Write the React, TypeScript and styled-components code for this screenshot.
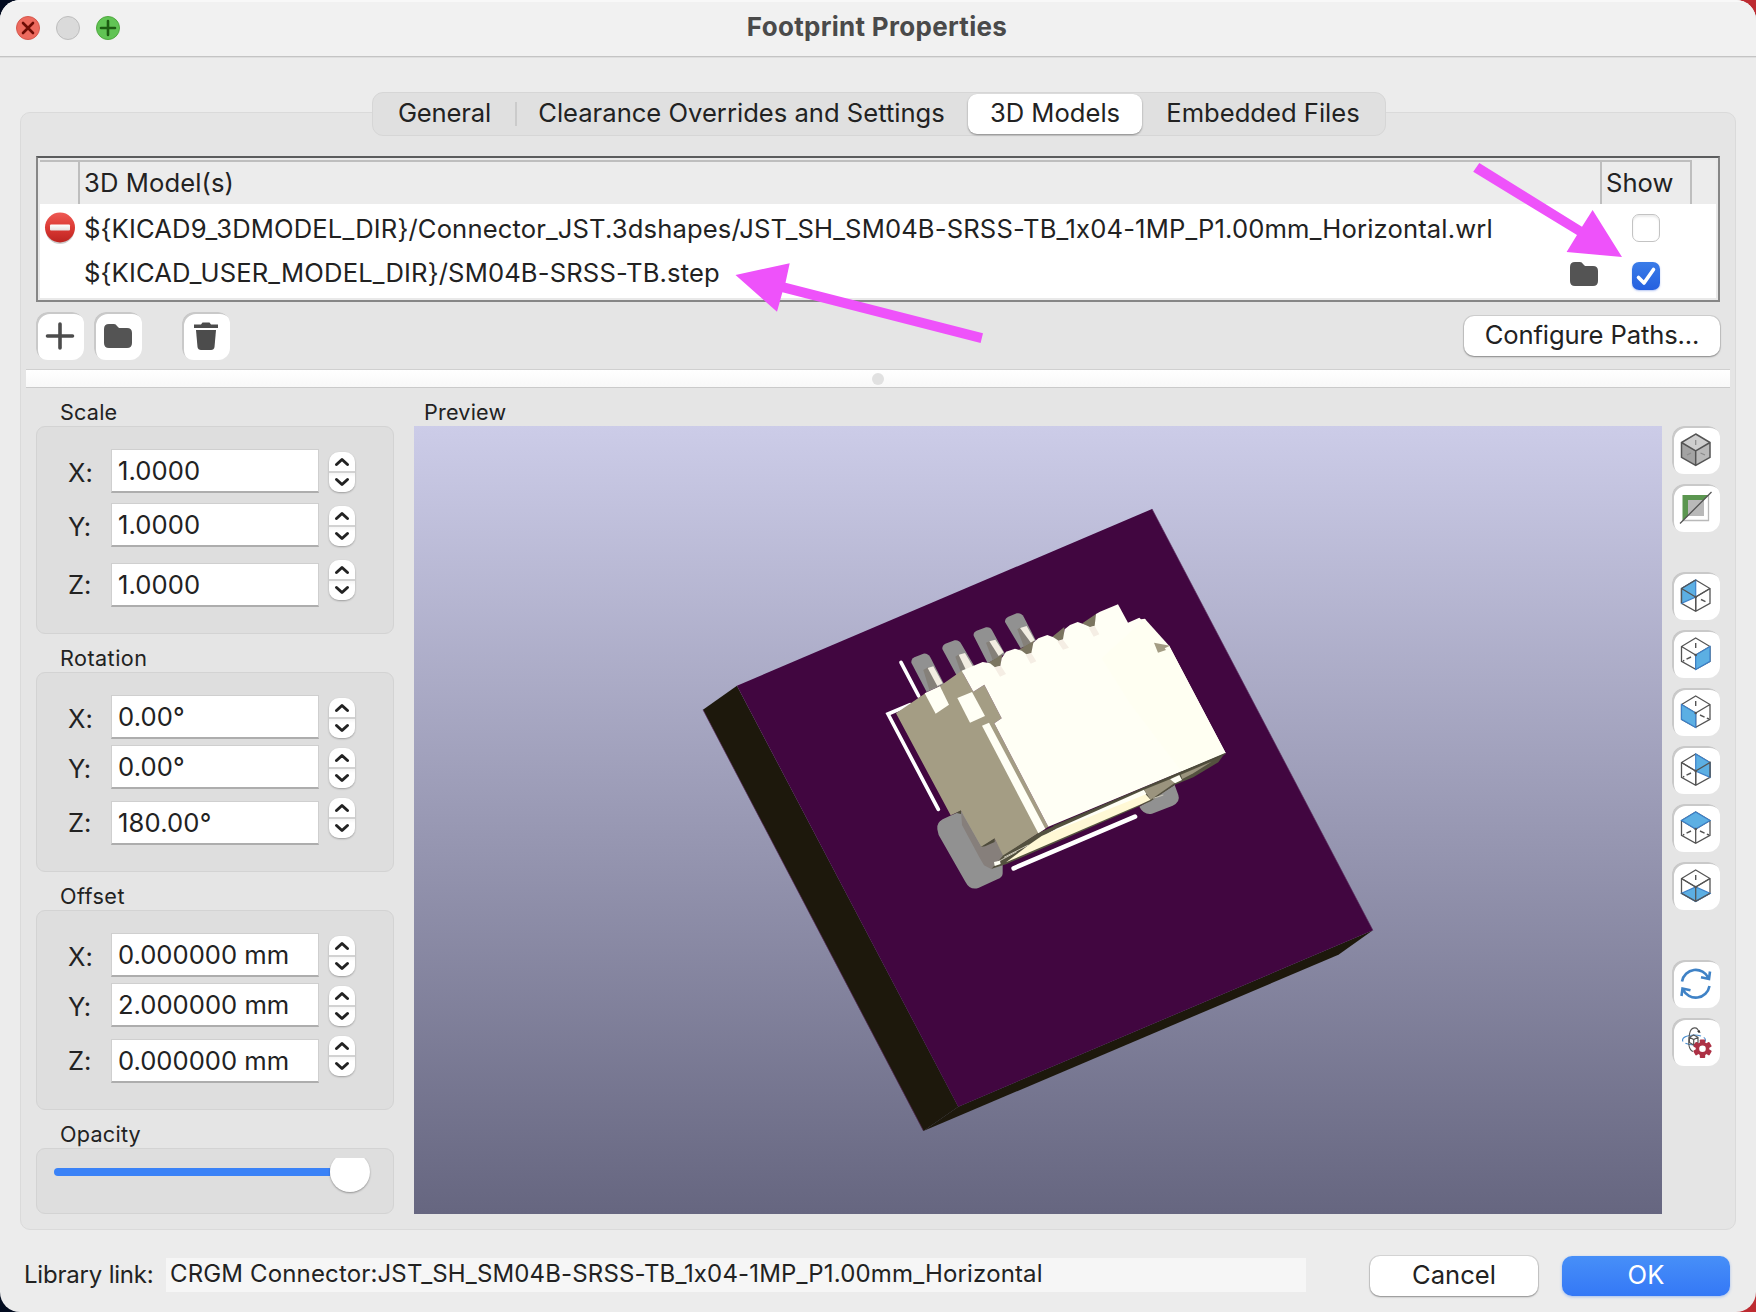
import React from "react";
import styled, { createGlobalStyle } from "styled-components";

const GlobalStyle = createGlobalStyle`
  *, *::before, *::after { box-sizing: border-box; }
  body {
    margin: 0;
    background: linear-gradient(90deg, #030c20 0 50%, #bd2b31 50% 100%);
    font-family: Inter, "Liberation Sans", sans-serif;
    font-size: 25.6px;
    line-height: 32px;
    font-feature-settings: "calt" 0;
    color: #222;
    overflow: hidden;
  }
`;

const Window = styled.div`
  position: relative;
  width: 1756px;
  height: 1312px;
  display: flex;
  flex-direction: column;
  background: #ececec;
  border-radius: 20px;
  overflow: hidden;
`;

const TitleBar = styled.header`
  flex: none;
  height: 57px;
  display: grid;
  grid-template-columns: 200px 1fr 202px;
  background: #f1f1f1;
  border-bottom: 1px solid #c4c4c4;
  box-shadow: inset 0 2px 0 #f8f8f8, 0 1px 0 #dedede;
`;

const Lights = styled.div`
  display: flex;
  gap: 16px;
  padding: 16px 0 0 16px;
`;

const Light = styled.span<{ $fill: string; $edge: string }>`
  width: 24px;
  height: 24px;
  border-radius: 50%;
  background: ${(p) => p.$fill};
  border: 1px solid ${(p) => p.$edge};
  svg { display: block; width: 22px; height: 22px; }
`;

const Title = styled.h1`
  margin: 0;
  padding-top: 11px;
  text-align: center;
  font-size: 26px;
  font-weight: 700;
  line-height: 32px;
  letter-spacing: 0.3px;
  color: #4a4a4a;
`;

const TabBar = styled.nav`
  position: relative;
  z-index: 1;
  flex: none;
  width: 1014px;
  height: 44px;
  margin: 35px 0 0 372px;
  padding: 1px;
  display: flex;
  align-items: center;
  background: #e0e0e0;
  border: 1px solid #d6d6d6;
  border-radius: 11px;
`;

const Tab = styled.div<{ $w: number; $active?: boolean; $ls?: number; $after?: number }>`
  width: ${(p) => p.$w}px;
  height: 40px;
  margin-right: ${(p) => p.$after ?? 0}px;
  padding-bottom: 3px;
  display: flex;
  align-items: center;
  justify-content: center;
  white-space: nowrap;
  letter-spacing: ${(p) => p.$ls ?? 0}px;
  border-radius: 9px;
  background: ${(p) => (p.$active ? "#fff" : "transparent")};
  box-shadow: ${(p) => (p.$active ? "0 1px 2px rgba(0,0,0,.4)" : "none")};
`;

const TabDivider = styled.span`
  width: 2px;
  height: 24px;
  background: #cbcbcb;
`;

const Panel = styled.main`
  flex: none;
  height: 1118px;
  margin: -24px 20px 0;
  padding: 43px 15px 0;
  background: #e5e5e5;
  border: 1px solid #dadada;
  border-radius: 10px;
`;

const ModelTable = styled.section`
  width: 1684px;
  height: 146px;
  padding: 2px;
  background: #e9e9e9;
  border: 2px solid #868686;
  border-top-color: #5b5c5d;
`;

const HeaderRow = styled.div`
  height: 44px;
  display: grid;
  grid-template-columns: 40px 1522px 90px 1fr;
  background: #ececec;
`;

const HeaderCell = styled.div<{ $last?: boolean; $ls?: number }>`
  padding: 5px 0 0 4px;
  letter-spacing: ${(p) => p.$ls ?? 0}px;
  border-top: 2px solid ${(p) => (p.$last ? "transparent" : "#bebebe")};
  border-right: ${(p) => (p.$last ? 0 : 2)}px solid #bebebe;
`;

const ModelRows = styled.div`
  height: 94px;
  background: #fff;
  overflow: hidden;
`;

const ModelRow = styled.div`
  height: 48px;
  display: grid;
  grid-template-columns: 44px 1486px 62px 1fr;
`;

const ErrorCell = styled.div`
  padding: 8px 0 0 4px;
`;

const PathCell = styled.div<{ $top: number }>`
  padding-top: ${(p) => p.$top}px;
  white-space: nowrap;
  letter-spacing: 0.14px;
`;

const FolderCell = styled.div`
  padding-top: 10px;
  svg { display: block; }
`;

const CheckBox = styled.span<{ $checked?: boolean }>`
  display: block;
  width: 28px;
  height: 28px;
  margin-top: 10px;
  border-radius: 7px;
  border: ${(p) => (p.$checked ? "0" : "1px solid #c3c3c3")};
  background: ${(p) => (p.$checked ? "linear-gradient(#3a7ce8, #2560df)" : "#fff")};
  box-shadow: ${(p) => (p.$checked ? "0 1px 2px rgba(40,90,220,.35)" : "inset 0 2px 2px rgba(0,0,0,.08)")};
  svg { display: block; }
`;

const ActionBar = styled.div`
  display: flex;
  gap: 10px;
  height: 58px;
  padding-top: 10px;
`;

const ToolButton = styled.button<{ $before?: number }>`
  flex: none;
  width: 48px;
  height: 48px;
  margin: 0;
  margin-left: ${(p) => p.$before ?? 0}px;
  padding: 0;
  border: 0;
  border-radius: 12px;
  background: #fff;
  box-shadow: inset 2px 2px 0 #c9c9c9;
  svg { display: block; }
`;

const PushButton = styled.button<{ $w: number; $primary?: boolean; $ls?: number }>`
  flex: none;
  width: ${(p) => p.$w}px;
  height: 40px;
  padding: 0 0 3px;
  border: 0;
  border-radius: 10px;
  font: inherit;
  letter-spacing: ${(p) => p.$ls ?? 0}px;
  color: ${(p) => (p.$primary ? "#fff" : "#222")};
  background: ${(p) => (p.$primary ? "linear-gradient(#478ff8, #3478f6)" : "#fff")};
  box-shadow: ${(p) =>
    p.$primary ? "0 1px 3px rgba(52,120,246,.4)" : "0 0 0 1px rgba(0,0,0,.09), 0 1px 2px rgba(0,0,0,.35)"};
`;

const ConfigureSlot = styled.div`
  margin: 4px 0 0 auto;
`;

const Splitter = styled.div`
  height: 19px;
  margin: 9px -10px 0;
  display: flex;
  align-items: center;
  justify-content: center;
  background: linear-gradient(#fff, #f8f8f8);
  border-top: 1px solid #d0d0d0;
  border-bottom: 1px solid #cacaca;
`;

const SplitterDot = styled.span`
  width: 12px;
  height: 12px;
  border-radius: 50%;
  background: #e1e1e1;
`;

const Editor = styled.div`
  display: grid;
  grid-template-columns: 358px 1248px 48px;
  column-gap: 20px;
`;

const EditorColumn = styled.div``;

const SideColumn = styled.div`
  width: 48px;
  margin-left: -10px;
  padding-top: 38px;
  display: flex;
  flex-direction: column;
  gap: 10px;
`;

const SideGap = styled.div<{ $h: number }>`
  height: ${(p) => p.$h}px;
`;

const GroupLabel = styled.div<{ $x: number; $ls: number }>`
  height: 38px;
  padding: 10px 0 0 ${(p) => p.$x}px;
  font-size: 21.6px;
  line-height: 28px;
  letter-spacing: ${(p) => p.$ls}px;
`;

const GroupBox = styled.div<{ $h: number }>`
  height: ${(p) => p.$h}px;
  padding: 22px 0 0 31px;
  background: #dedede;
  border: 1px solid #d3d3d3;
  border-radius: 9px;
`;

const FieldRow = styled.div<{ $pitch: number }>`
  height: ${(p) => p.$pitch}px;
  display: grid;
  grid-template-columns: 43px 208px 1fr;
  align-items: start;
`;

const AxisLabel = styled.label<{ $last: boolean }>`
  padding-top: ${(p) => (p.$last ? 12 : 8)}px;
`;

const ValueBox = styled.div<{ $last: boolean; $ls: number }>`
  height: 44px;
  margin-top: ${(p) => (p.$last ? 6 : 0)}px;
  padding: 5px 0 0 6px;
  background: #fff;
  border: 1px solid #cfcfcf;
  border-bottom: 2px solid #adadad;
  letter-spacing: ${(p) => p.$ls}px;
`;

const StepperBox = styled.div`
  width: 26px;
  height: 40px;
  margin: 3px 0 0 10px;
  border-radius: 10px;
  background: linear-gradient(#fff 0 19px, #d2d2d2 19px 21px, #f5f5f5 21px, #fff 25px);
  box-shadow: 0 1px 2px rgba(0, 0, 0, 0.3);
  svg { display: block; }
`;

const OpacityBox = styled.div`
  height: 66px;
  padding: 9px 0 0 17px;
  background: #dedede;
  border: 1px solid #d3d3d3;
  border-radius: 9px;
`;

const Slider = styled.div`
  display: flex;
  width: 322px;
  height: 38px;
  overflow: hidden;
`;

const SliderTrack = styled.span`
  width: 276px;
  height: 8px;
  margin-top: 10px;
  border-radius: 4px 0 0 4px;
  background: #3a82f7;
`;

const SliderThumb = styled.span`
  width: 40px;
  height: 40px;
  margin-top: -6px;
  border-radius: 50%;
  background: #fff;
  box-shadow: 0 1px 2px rgba(0, 0, 0, 0.35);
`;

const Viewport = styled.div`
  width: 1248px;
  height: 788px;
  background: linear-gradient(#cccce8, #666680);
  svg { display: block; }
`;

const Footer = styled.footer`
  flex: 1;
  display: flex;
  padding: 26px 26px 0 24px;
`;

const FooterLabel = styled.span`
  width: 142px;
  padding-top: 3px;
  white-space: nowrap;
  font-size: 24px;
  letter-spacing: -0.2px;
`;

const LinkField = styled.div`
  width: 1140px;
  height: 34px;
  margin: 2px 64px 0 0;
  padding-left: 4px;
  font-size: 24px;
  line-height: 31px;
  background: #f6f6f6;
  white-space: nowrap;
  letter-spacing: 0.15px;
`;

const FooterButtons = styled.div`
  display: flex;
  gap: 24px;
`;

const Annotations = styled.svg`
  position: absolute;
  left: 0;
  top: 0;
  pointer-events: none;
`;

const FolderShape = () => (
  <path d="M0 5Q0 0 5 0H10Q12 0 13 2L15 4H23Q28 4 28 9V19Q28 24 23 24H5Q0 24 0 19Z" fill="#545454" />
);

const PlusIcon = () => (
  <svg width="48" height="48">
    <path d="M24 12V36M11.500 24H36.500" stroke="#4c4c4c" strokeWidth="3.600" strokeLinecap="round" />
  </svg>
);

const FolderIcon = () => (
  <svg width="48" height="48">
    <g transform="translate(10 12)"><FolderShape /></g>
  </svg>
);

const TrashIcon = () => (
  <svg width="48" height="48" fill="#4c4c4c">
    <path d="M12 12.500H19L20.500 10.500H27.500L29 12.500H36V16H12Z" />
    <path d="M14 18H34L32.500 35Q32 38 29 38H19Q16 38 15.500 35Z" />
  </svg>
);

const ErrorIcon = () => (
  <svg width="32" height="34">
    <defs>
      <linearGradient id="err" x1="0" y1="0" x2="0" y2="1">
        <stop offset="0" stopColor="#ee5a55" />
        <stop offset="0.500" stopColor="#dc3a34" />
        <stop offset="1" stopColor="#bc2420" />
      </linearGradient>
      <linearGradient id="bar" x1="0" y1="0" x2="0" y2="1">
        <stop offset="0" stopColor="#fff" />
        <stop offset="1" stopColor="#e4e0e0" />
      </linearGradient>
    </defs>
    <circle cx="16" cy="17.500" r="14.500" fill="#000" opacity="0.200" />
    <circle cx="16" cy="15.500" r="15" fill="url(#err)" />
    <rect x="6" y="12.500" width="20" height="6" rx="1" fill="url(#bar)" />
  </svg>
);

type Face = "left" | "right" | "front" | "back" | "top" | "bottom";

const faces: Record<Face, { poly: string; dash: string; over?: string }> = {
  left: {
    poly: "9.500,16.500 23.700,8 23.700,25 9.500,31.300",
    dash: "M29 27.500L34 30",
    over: "M9.500 16.500L23.700 25L38 16.500M23.700 25V39M9.500 31V16.500L23.700 8",
  },
  right: { poly: "23.700,25 38,16.500 38,31.300 23.700,39.500", dash: "M23.700 13V19M19 27L11 31" },
  front: { poly: "9.500,16.500 23.700,25 23.700,39.500 9.500,31.300", dash: "M23.700 13V19M28 27L37 31" },
  back: {
    poly: "23.700,8 38,16.500 38,31.300 23.700,25",
    dash: "M19 27L11 31",
    over: "M9.500 16.500L23.700 25L38 16.500V31.300M23.700 25V39",
  },
  top: { poly: "9.500,16.500 23.700,8 38,16.500 23.700,25", dash: "M19 27L11 31M28 27L37 31" },
  bottom: {
    poly: "9.500,31.300 23.700,25 38,31.300 23.700,39.500",
    dash: "M23.700 13V19",
    over: "M9.500 16.500L23.700 25L38 16.500M23.700 25V39.300M9.500 31.300L23.700 39.300L38 31.300",
  },
};

const cubeEdges = "M23.700 8L38 16.500V31.300L23.700 39.300L9.500 31.300V16.500ZM9.500 16.500L23.700 25L38 16.500M23.700 25V39";

const CubeIcon = ({ face }: { face: Face }) => (
  <svg width="48" height="48" fill="none">
    <path d={cubeEdges} stroke="#545454" strokeWidth="1.300" />
    <polygon points={faces[face].poly} fill="#5cafe3" stroke="#3d80c8" strokeWidth="1.200" />
    {faces[face].over && <path d={faces[face].over} stroke="#545454" strokeWidth="1.300" />}
    <path d={faces[face].dash} stroke="#545454" strokeWidth="1.400" strokeDasharray="5 2.500" />
    <circle cx="23.700" cy="25" r="1.300" fill="#545454" />
  </svg>
);

const SolidCubeIcon = () => (
  <svg width="48" height="48" fill="none">
    <polygon points="9.500,16.500 23.700,8 38,16.500 23.700,25" fill="#cecece" />
    <polygon points="9.500,16.500 23.700,25 23.700,39.300 9.500,31.300" fill="#a3a3a3" />
    <polygon points="38,16.500 23.700,25 23.700,39.300 38,31.300" fill="#b9b9b9" />
    <path d="M23.700 14V19M19 27L15 29M28.500 27L33 29" stroke="#8a8a8a" strokeWidth="1.200" />
    <path d={cubeEdges} stroke="#545454" strokeWidth="1.500" />
  </svg>
);

const BoardIcon = () => (
  <svg width="48" height="48" fill="none">
    <path d="M36.500 11V36.500H11" stroke="#b9b9b9" strokeWidth="1.300" />
    <path d="M10.500 11H37L31.500 16H16V32L10.500 37Z" fill="#5b9650" />
    <rect x="16" y="16" width="16" height="16" fill="#b9b9b9" />
    <path d="M8 39.500L39.500 8" stroke="#545454" strokeWidth="1.300" />
  </svg>
);

const RefreshIcon = () => (
  <svg width="48" height="48" fill="none" stroke="#3f82c6" strokeWidth="2.600">
    <path d="M10 21.500A14 14 0 0 1 36.500 18M38 11.500L37 19L29 17.300" />
    <path d="M37.500 26A14 14 0 0 1 11 29.500M9.500 36L10.500 28.500L18.500 30.300" />
  </svg>
);

const OrbitGearIcon = () => (
  <svg width="48" height="48" fill="none">
    <ellipse cx="22" cy="22" rx="11.500" ry="5" stroke="#4a8fd0" strokeWidth="1.100" strokeDasharray="22 3" />
    <path d="M27 15C26 8 19 8 17.500 16C16 25 17 32 21 33.500" stroke="#545454" strokeWidth="1.100" />
    <path d="M25 13.500L28.500 15L27.500 12Z" fill="#333" />
    <path d="M21.700 17L26 19.300V24.500L21.700 27L17.400 24.500V19.300ZM17.400 19.300L21.700 21.500L26 19.300M21.700 21.500V27" stroke="#545454" strokeWidth="1.200" />
    <g transform="translate(30.500 30.700)" fill="#ad3145">
      {[0, 60, 120].map((a) => (
        <rect key={a} x="-2.700" y="-9.300" width="5.400" height="18.600" rx="0.800" transform={`rotate(${a})`} />
      ))}
      <circle r="6.800" />
      <circle r="3.300" fill="#fff" />
    </g>
  </svg>
);

const Stepper = () => (
  <StepperBox>
    <svg width="26" height="40" fill="none" stroke="#222" strokeWidth="3" strokeLinecap="round" strokeLinejoin="round">
      <path d="M7.500 12.500L13 7.500L18.500 12.500M7.500 27.500L13 32.500L18.500 27.500" />
    </svg>
  </StepperBox>
);

const BoardScene = () => (
  <svg width="1248" height="788">
    <g transform="translate(266 64) scale(0.45918 0.42092)">
      <polygon points="124,465 606,1465 530,1523 50,522" fill="#1d180c" />
      <polygon points="606,1465 1509,1046 1434,1104 530,1523" fill="#1d180c" />
      <polygon points="1028,45 1509,1046 606,1465 124,465" fill="#410640" />
      <path d="M50 522L530 1522M1028 45L1509 1046" stroke="#5a2a5c" strokeWidth="1.500" />
    </g>
    <g transform="translate(446 154) scale(0.33333)">
      <g fill="#919191">
        <path d="M154 248Q153 238 163 232L190 221Q203 219 211 232L252 312L200 336Z" />
        <path d="M247 207Q246 197 256 191L284 181Q297 179 304 192L345 262L292 290Z" />
        <path d="M341 167Q339 157 350 152L378 142Q391 140 397 152L435 222L383 250Z" />
        <path d="M435 126Q434 116 445 110L470 100Q484 97 491 110L528 182L482 205Z" />
        <path d="M232 748Q229 728 248 718L303 692L428 850V880Q428 892 412 898L355 924Q330 932 316 905L236 765Z" />
        <path d="M838 680Q852 706 876 701L938 677Q962 665 955 645L944 615L872 660Z" />
      </g>
      <g fill="#858079">
        <polygon points="190,270 204,262 236,318 208,330" />
        <polygon points="286,230 298,222 325,266 303,278" />
        <polygon points="378,188 390,183 420,228 398,240" />
        <polygon points="472,148 482,142 514,188 492,202" />
      </g>
      <g fill="#f2ede2">
        <polygon points="203,264 220,259 248,310 232,318" />
        <polygon points="296,224 315,219 340,262 318,270" />
        <polygon points="388,184 406,179 431,217 416,228" />
        <polygon points="480,144 500,138 524,180 514,190" />
      </g>
      <g fill="none" stroke="#fff" strokeWidth="11" strokeLinecap="round">
        <path d="M123 247L176 348" />
        <path d="M150 374L84 402L235 688" />
        <path d="M461 865L825 710" strokeWidth="14" />
      </g>
      <polygon points="303,694 365,802 404,776 432,826 422,846 395,868 372,856 358,832 306,735" fill="#867f7b" />
      <polygon
        points="108,400 196,340 240,318 305,272 340,335 373,314 425,415 403,430 565,740 535,760 430,828 404,776 365,802 303,692 272,706"
        fill="#a49d84"
      />
      <path d="M272 707L303 691V702L290 699ZM362 801L404 775V786L375 799Z" fill="#4e4b3b" />
      <g fill="#7b7560">
        <polygon points="384,249 427,223 422,257 405,263" />
        <polygon points="475,210 522,182 516,220 497,224" />
        <polygon points="576,171 613,141 612,178 595,184" />
        <polygon points="667,130 709,101 706,139 688,144" />
      </g>
      <polygon points="430,826 535,759 588,736 1097,517 1075,547 1000,592 945,614 872,664 440,852 395,866" fill="#54513f" />
      <polygon points="438,847 505,796 545,768 590,748 854,640 872,659 838,675" fill="#fff8d5" />
      <polygon points="560,762 592,745 852,629 860,642" fill="#fffff5" />
      <polygon points="852,629 930,598 945,608 872,659" fill="#9b947e" />
      <polygon points="930,598 958,585 966,600 945,610" fill="#fffff5" />
      <polygon points="962,584 1055,545 1000,580 967,597" fill="#9b947e" />
      <path d="M405 850L470 815M432 832L505 795M880 655L910 645" stroke="#c9c5b6" strokeWidth="3" />
      <polygon points="402,846 420,842 422,852 404,858" fill="#fffff5" />
      <polygon
        points="305,272 368,246 390,250 405,262 421,258 425,235 438,215 465,206 485,212 499,223 514,219 520,188 535,175 562,165 580,172 596,182 609,178 614,148 630,135 653,126 670,132 690,141 704,137 708,102 720,95 774,73 804,128 838,113 843,118 855,116 892,188 898,204 928,198 1097,519 565,740 403,430 425,415 373,314 340,335"
        fill="#fffff5"
      />
      <polygon points="725,235 855,117 928,198 1097,519 965,574 810,370" fill="#fffff2" />
      <path d="M580 739L1096 521" stroke="#4b493a" strokeWidth="4" />
      <polygon points="882,188 930,197 914,205 918,210 894,218" fill="#a49d84" />
      <g fill="#f5eee4">
        <polygon points="403,262 422,257 438,282 420,290" />
        <polygon points="497,224 514,220 529,244 512,251" />
        <polygon points="592,184 609,179 627,203 609,209" />
        <polygon points="686,143 704,138 718,163 701,170" />
      </g>
      <g fill="#fffff5">
        <polygon points="194,340 240,319 267,374 227,401" />
        <polygon points="292,354 336,336 375,408 330,428" />
        <polygon points="366,437 387,428 556,746 535,760" />
      </g>
    </g>
  </svg>
);

interface Group {
  label: string;
  ls: number;
  valueLs: number;
  height: number;
  pitch: number;
  values: string[];
}

const groups: Group[] = [
  { label: "Scale", ls: 0.2, valueLs: 0.1, height: 208, pitch: 54, values: ["1.0000", "1.0000", "1.0000"] },
  { label: "Rotation", ls: 0.45, valueLs: 0.15, height: 200, pitch: 50, values: ["0.00°", "0.00°", "180.00°"] },
  { label: "Offset", ls: 0.45, valueLs: 0, height: 200, pitch: 50, values: ["0.000000 mm", "2.000000 mm", "0.000000 mm"] },
];

const axes = ["X:", "Y:", "Z:"];

export default function App() {
  return (
    <>
      <GlobalStyle />
      <Window>
        <TitleBar>
          <Lights>
            <Light $fill="#ed6a5e" $edge="#d5574c">
              <svg><path d="M6 6L16 16M16 6L6 16" stroke="#6e0c05" strokeWidth="2.600" strokeLinecap="round" /></svg>
            </Light>
            <Light $fill="#dadada" $edge="#bdbdbd" />
            <Light $fill="#61c454" $edge="#4fa83f">
              <svg><path d="M11 4V18M4 11H18" stroke="#1d5c12" strokeWidth="2.600" strokeLinecap="round" /></svg>
            </Light>
          </Lights>
          <Title>Footprint Properties</Title>
        </TitleBar>

        <TabBar>
          <Tab $w={141} $ls={-0.15}>General</Tab>
          <TabDivider />
          <Tab $w={449} $after={2}>Clearance Overrides and Settings</Tab>
          <Tab $w={174} $active>3D Models</Tab>
          <Tab $w={242}>Embedded Files</Tab>
        </TabBar>

        <Panel>
          <ModelTable>
            <HeaderRow>
              <HeaderCell />
              <HeaderCell $ls={0.1}>3D Model(s)</HeaderCell>
              <HeaderCell>Show</HeaderCell>
              <HeaderCell $last />
            </HeaderRow>
            <ModelRows>
              <ModelRow>
                <ErrorCell><ErrorIcon /></ErrorCell>
                <PathCell $top={9}>
                  {"${KICAD9_3DMODEL_DIR}/Connector_JST.3dshapes/JST_SH_SM04B-SRSS-TB_1x04-1MP_P1.00mm_Horizontal.wrl"}
                </PathCell>
                <span />
                <CheckBox />
              </ModelRow>
              <ModelRow>
                <span />
                <PathCell $top={5}>{"${KICAD_USER_MODEL_DIR}/SM04B-SRSS-TB.step"}</PathCell>
                <FolderCell><svg width="28" height="24"><FolderShape /></svg></FolderCell>
                <CheckBox $checked>
                  <svg width="28" height="28" fill="none">
                    <path d="M6.500 15.500L12 21L21.500 7.500" stroke="#fff" strokeWidth="3.600" strokeLinecap="round" strokeLinejoin="round" />
                  </svg>
                </CheckBox>
              </ModelRow>
            </ModelRows>
          </ModelTable>

          <ActionBar>
            <ToolButton><PlusIcon /></ToolButton>
            <ToolButton><FolderIcon /></ToolButton>
            <ToolButton $before={30}><TrashIcon /></ToolButton>
            <ConfigureSlot>
              <PushButton $w={256} $ls={-0.12}>Configure Paths...</PushButton>
            </ConfigureSlot>
          </ActionBar>

          <Splitter><SplitterDot /></Splitter>

          <Editor>
            <EditorColumn>
              {groups.map((g) => (
                <React.Fragment key={g.label}>
                  <GroupLabel $x={24} $ls={g.ls}>{g.label}</GroupLabel>
                  <GroupBox $h={g.height}>
                    {g.values.map((v, i) => (
                      <FieldRow key={axes[i]} $pitch={g.pitch}>
                        <AxisLabel $last={i === 2}>{axes[i]}</AxisLabel>
                        <ValueBox $last={i === 2} $ls={g.valueLs}>{v}</ValueBox>
                        <Stepper />
                      </FieldRow>
                    ))}
                  </GroupBox>
                </React.Fragment>
              ))}
              <GroupLabel $x={24} $ls={0.25}>Opacity</GroupLabel>
              <OpacityBox>
                <Slider>
                  <SliderTrack />
                  <SliderThumb />
                </Slider>
              </OpacityBox>
            </EditorColumn>

            <EditorColumn>
              <GroupLabel $x={10} $ls={0.2}>Preview</GroupLabel>
              <Viewport><BoardScene /></Viewport>
            </EditorColumn>

            <SideColumn>
              <ToolButton><SolidCubeIcon /></ToolButton>
              <ToolButton><BoardIcon /></ToolButton>
              <SideGap $h={20} />
              {(["left", "right", "front", "back", "top", "bottom"] as Face[]).map((f) => (
                <ToolButton key={f}><CubeIcon face={f} /></ToolButton>
              ))}
              <SideGap $h={30} />
              <ToolButton><RefreshIcon /></ToolButton>
              <ToolButton><OrbitGearIcon /></ToolButton>
            </SideColumn>
          </Editor>
        </Panel>

        <Footer>
          <FooterLabel>Library link:</FooterLabel>
          <LinkField>CRGM Connector:JST_SH_SM04B-SRSS-TB_1x04-1MP_P1.00mm_Horizontal</LinkField>
          <FooterButtons>
            <PushButton $w={168}>Cancel</PushButton>
            <PushButton $w={168} $primary>OK</PushButton>
          </FooterButtons>
        </Footer>

        <Annotations width="1756" height="400" fill="#ee52fa">
          <polygon points="735.500,275 789.700,263.300 785.500,282.700 983,333.300 980.600,343 782.400,292.300 777,311.700" />
          <polygon points="1622,257 1592.600,210 1582,226.700 1479.300,163 1473.200,171.700 1577,235 1566.600,252" />
        </Annotations>
      </Window>
    </>
  );
}
